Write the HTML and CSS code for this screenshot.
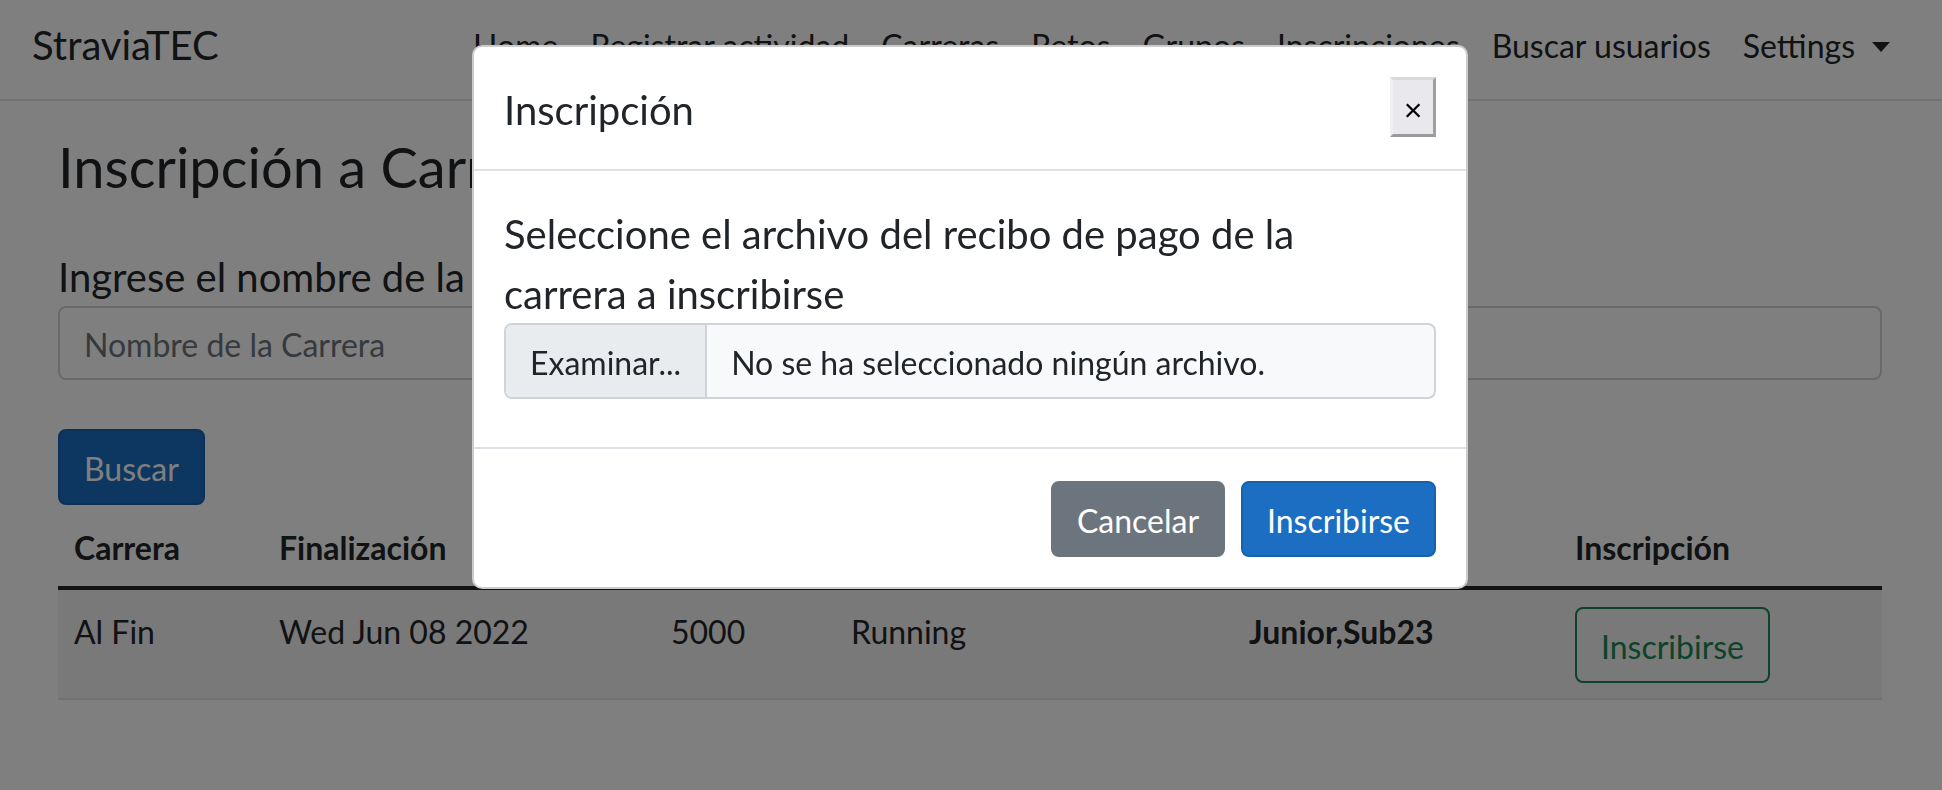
FILE: index.html
```html
<!DOCTYPE html>
<html lang="es">
<head>
<meta charset="utf-8">
<title>StraviaTEC - Inscripción a Carreras</title>
<link rel="stylesheet" href="styles.css">
</head>
<body>
<header class="navbar">
  <a class="brand" href="#">StraviaTEC</a>
  <ul class="nav">
    <li><a class="nav-link" href="#">Home</a></li>
    <li><a class="nav-link" href="#">Registrar actividad</a></li>
    <li><a class="nav-link" href="#">Carreras</a></li>
    <li><a class="nav-link" href="#">Retos</a></li>
    <li><a class="nav-link" href="#">Grupos</a></li>
    <li><a class="nav-link" href="#">Inscripciones</a></li>
    <li><a class="nav-link" href="#">Buscar usuarios</a></li>
    <li><a class="nav-link dropdown-toggle" href="#">Settings</a></li>
  </ul>
</header>

<main class="page">
  <h3 class="page-title">Inscripción a Carreras</h3>
  <label class="search-label" for="race">Ingrese el nombre de la carrera</label>
  <input class="form-control" id="race" type="text" placeholder="Nombre de la Carrera">
  <button class="btn btn-primary search-btn" type="button">Buscar</button>

  <table class="races">
    <colgroup>
      <col class="c-name"><col class="c-date"><col class="c-dist"><col class="c-type"><col class="c-cat"><col class="c-action">
    </colgroup>
    <thead>
      <tr>
        <th>Carrera</th>
        <th>Finalización</th>
        <th>Distancia</th>
        <th>Actividad</th>
        <th>Categorías</th>
        <th>Inscripción</th>
      </tr>
    </thead>
    <tbody>
      <tr>
        <td>Al Fin</td>
        <td>Wed Jun 08 2022</td>
        <td>5000</td>
        <td>Running</td>
        <td class="bold">Junior,Sub23</td>
        <td class="action-cell"><button class="btn btn-outline-success" type="button">Inscribirse</button></td>
      </tr>
    </tbody>
  </table>
</main>

<div class="backdrop"></div>

<div class="modal">
  <div class="modal-dialog">
    <div class="modal-content">
      <div class="modal-header">
        <h5 class="modal-title">Inscripción</h5>
        <button class="close-btn" type="button">×</button>
      </div>
      <div class="modal-body">
        <p class="prompt">Seleccione el archivo del recibo de pago de la carrera a inscribirse</p>
        <div class="file-control">
          <span class="file-btn">Examinar...</span>
          <span class="file-name">No se ha seleccionado ningún archivo.</span>
        </div>
      </div>
      <div class="modal-footer">
        <button class="btn btn-secondary" type="button">Cancelar</button>
        <button class="btn btn-primary" type="button">Inscribirse</button>
      </div>
    </div>
  </div>
</div>
</body>
</html>
```

FILE: styles.css
```css
* { box-sizing: border-box; }

html, body {
  margin: 0;
  padding: 0;
}

body {
  font-family: "Lato", "Open Sans", sans-serif;
  font-size: 32px;
  line-height: 1.5;
  color: #212529;
  background: #fff;
  width: 1942px;
  height: 790px;
  overflow: hidden;
}

a { text-decoration: none; color: inherit; }

/* ---------- navbar ---------- */
.navbar {
  height: 101px;
  display: flex;
  align-items: flex-start;
  padding: 15px 36px 0 32px;
  border-bottom: 2px solid #e5e5e5;
  background: #fff;
}

.brand {
  font-size: 40px;
  line-height: 60px;
  color: #212529;
}

.nav {
  list-style: none;
  margin: 7px 0 0 auto;
  padding: 0;
  display: flex;
}

.nav-link {
  display: block;
  padding: 0 16px;
  line-height: 48px;
  color: #212529;
}

.dropdown-toggle::after {
  content: "";
  display: inline-block;
  margin-left: 17px;
  vertical-align: 6px;
  border-top: 10px solid;
  border-left: 9px solid transparent;
  border-right: 9px solid transparent;
}

/* ---------- page ---------- */
.page {
  padding: 0 60px 0 58px;
}

.page-title {
  margin: 32px 0 46px;
  font-size: 56px;
  font-weight: 400;
  line-height: 1.2;
}

.search-label {
  display: block;
  font-size: 40px;
  line-height: 58px;
  padding-top: 2px;
}

.form-control {
  display: block;
  width: 100%;
  height: 74px;
  padding: 13px 24px 11px;
  font: inherit;
  color: #495057;
  border: 2px solid #ced4da;
  border-radius: 8px;
  background: #fff;
}

.form-control::placeholder { color: #6c757d; }

.btn {
  display: inline-block;
  font: inherit;
  line-height: 48px;
  padding: 14px 24px 10px;
  border: 2px solid transparent;
  border-radius: 8px;
  background: transparent;
  cursor: pointer;
}

.btn-primary {
  color: #fff;
  background: #1b6ec2;
  border-color: #1861ac;
}

.btn-secondary {
  color: #fff;
  background: #6c757d;
  border-color: #6c757d;
}

.btn-outline-success {
  color: #198754;
  border-color: #198754;
}

.search-btn {
  display: block;
  margin-top: 49px;
}

/* ---------- table ---------- */
.races {
  width: 100%;
  margin-top: 1px;
  table-layout: fixed;
  border-collapse: collapse;
}

.c-name { width: 205px; }
.c-date { width: 392px; }
.c-dist { width: 180px; }
.c-type { width: 398px; }
.c-cat { width: 326px; }
.c-action { width: 323px; }

.races th {
  text-align: left;
  font-weight: 700;
  padding: 18px 16px 14px;
  line-height: 48px;
  border-bottom: 4px solid #212529;
}

.races td {
  padding: 18px 16px 14px;
  line-height: 48px;
  vertical-align: top;
  border-bottom: 2px solid #dee2e6;
}

.races td.action-cell {
  padding: 17px 16px 15px;
}

.races tbody tr { background: rgba(0, 0, 0, .05); }

.bold { font-weight: 700; }

/* ---------- modal ---------- */
.backdrop {
  position: fixed;
  inset: 0;
  background: rgba(0, 0, 0, .5);
}

.modal {
  position: fixed;
  inset: 0;
  display: flex;
  justify-content: center;
  align-items: flex-start;
  padding-right: 2px;
}

.modal-dialog {
  width: 996px;
  margin-top: 45px;
}

.modal-content {
  background: #fff;
  border: 2px solid rgba(0, 0, 0, .2);
  border-radius: 10px;
}

.modal-header {
  display: flex;
  justify-content: space-between;
  align-items: flex-start;
  padding: 33px 30px 29px;
  border-bottom: 2px solid #dee2e6;
}

.modal-title {
  margin: 0;
  font-size: 40px;
  font-weight: 400;
  line-height: 60px;
}

.close-btn {
  width: 46px;
  height: 60px;
  margin-top: -3px;
  padding: 6px 0 0;
  font-family: "Liberation Sans", Arial, sans-serif;
  font-size: 32px;
  line-height: 1;
  color: #000;
  background: #e9e9ed;
  border: 3px solid;
  border-color: #d9d9d9 #a0a0a0 #9a9a9a #efefef;
}

.modal-body {
  padding: 32px 30px;
}

.prompt {
  max-width: 880px;
  margin: 0;
  font-size: 40px;
  line-height: 60px;
  padding-top: 1px;
  margin-bottom: -1px;
}

.file-control {
  display: flex;
  height: 76px;
  margin-bottom: 16px;
  border: 2px solid #ced4da;
  border-radius: 8px;
  overflow: hidden;
  background: #f8f9fa;
}

.file-btn {
  padding: 14px 24px 10px;
  line-height: 48px;
  background: #e9ecef;
  border-right: 2px solid #ced4da;
}

.file-name {
  padding: 14px 24px 10px;
  line-height: 48px;
}

.modal-footer {
  display: flex;
  justify-content: flex-end;
  gap: 16px;
  padding: 32px 30px 30px;
  border-top: 2px solid #dee2e6;
}
```
